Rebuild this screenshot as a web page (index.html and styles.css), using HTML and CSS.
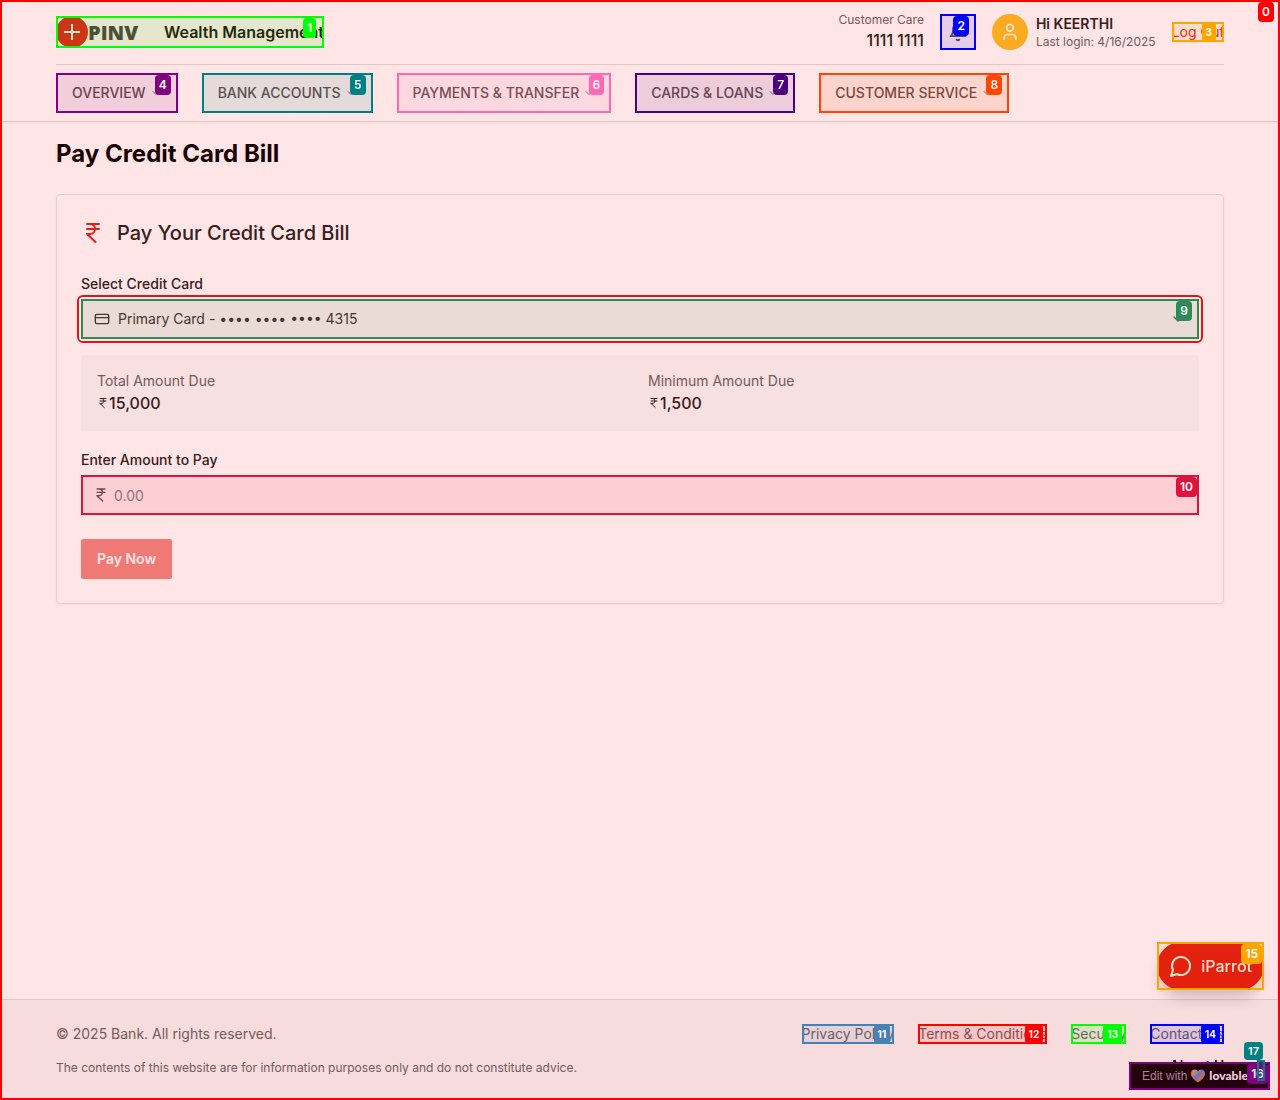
FILE: index.html
```html
<!DOCTYPE html>
<html lang="en">
<head>
<meta charset="utf-8">
<meta name="viewport" content="width=device-width, initial-scale=1">
<title>Pay Credit Card Bill</title>
<link rel="stylesheet" href="styles.css">
</head>
<body>
<div class="page">
  <header class="header">
    <div class="topbar">
      <a class="brand mark lime" href="#">
        <svg class="logo" width="90" height="32" viewBox="0 0 90 32" role="img" aria-label="PINV">
          <circle cx="16" cy="16" r="16" fill="#e2231a"/>
          <path d="M16 8v16M8 16h16" stroke="#fff" stroke-width="2"/>
          <text class="logo-text" x="32" y="24">PINV</text>
        </svg>
        <span class="brand-name">Wealth Management</span>
        <span class="tag tag-inner">1</span>
      </a>
      <div class="tools">
        <div class="care"><span class="small">Customer Care</span><span class="phone">1111 1111</span></div>
        <button class="bell mark blue" type="button" aria-label="Notifications">
          <svg class="icon" width="20" height="20" viewBox="0 0 24 24"><path d="M6 8a6 6 0 0 1 12 0c0 7 3 9 3 9H3s3-2 3-9M10.300 21a1.940 1.940 0 0 0 3.400 0"/></svg>
          <span class="tag">2</span>
        </button>
        <div class="user">
          <span class="avatar"><svg class="icon" width="20" height="20" viewBox="0 0 24 24"><path d="M19 21v-2a4 4 0 0 0-4-4H9a4 4 0 0 0-4 4v2"/><circle cx="12" cy="7" r="4"/></svg></span>
          <div class="who"><span class="hi">Hi KEERTHI</span><span class="small">Last login: 4/16/2025</span></div>
        </div>
        <button class="logout mark orange" type="button">Log Out<span class="tag tag-small tag-inner">3</span></button>
      </div>
    </div>
    <nav class="nav">
      <button class="nav-item mark purple" type="button">OVERVIEW<svg class="icon chevron" width="12" height="12" viewBox="0 0 24 24"><path d="m6 9 6 6 6-6"/></svg><span class="tag">4</span></button>
      <button class="nav-item mark teal" type="button">BANK ACCOUNTS<svg class="icon chevron" width="12" height="12" viewBox="0 0 24 24"><path d="m6 9 6 6 6-6"/></svg><span class="tag">5</span></button>
      <button class="nav-item mark pink" type="button">PAYMENTS &amp; TRANSFER<svg class="icon chevron" width="12" height="12" viewBox="0 0 24 24"><path d="m6 9 6 6 6-6"/></svg><span class="tag">6</span></button>
      <button class="nav-item mark indigo" type="button">CARDS &amp; LOANS<svg class="icon chevron" width="12" height="12" viewBox="0 0 24 24"><path d="m6 9 6 6 6-6"/></svg><span class="tag">7</span></button>
      <button class="nav-item mark orangered" type="button">CUSTOMER SERVICE<svg class="icon chevron" width="12" height="12" viewBox="0 0 24 24"><path d="m6 9 6 6 6-6"/></svg><span class="tag">8</span></button>
    </nav>
  </header>

  <main class="main">
    <h1>Pay Credit Card Bill</h1>
    <section class="card">
      <h2><svg class="icon title-icon" width="24" height="24" viewBox="0 0 24 24"><path d="M6 3h12M6 8h12M6 13l8.500 8M6 13h3M9 13c6.667 0 6.667-10 0-10"/></svg>Pay Your Credit Card Bill</h2>
      <form class="form">
        <label class="label" for="card">Select Credit Card</label>
        <div class="field select-field mark seagreen">
          <svg class="icon" width="16" height="16" viewBox="0 0 24 24"><rect x="2" y="5" width="20" height="14" rx="2"/><path d="M2 10h20"/></svg>
          <select id="card"><option>Primary Card - •••• •••• •••• 4315</option></select>
          <svg class="icon chevron" width="16" height="16" viewBox="0 0 24 24"><path d="m6 9 6 6 6-6"/></svg>
          <span class="tag">9</span>
        </div>
        <dl class="dues">
          <div><dt>Total Amount Due</dt><dd><svg class="icon" width="12" height="12" viewBox="0 0 24 24"><path d="M6 3h12M6 8h12M6 13l8.500 8M6 13h3M9 13c6.667 0 6.667-10 0-10"/></svg>15,000</dd></div>
          <div><dt>Minimum Amount Due</dt><dd><svg class="icon" width="12" height="12" viewBox="0 0 24 24"><path d="M6 3h12M6 8h12M6 13l8.500 8M6 13h3M9 13c6.667 0 6.667-10 0-10"/></svg>1,500</dd></div>
        </dl>
        <label class="label" for="amount">Enter Amount to Pay</label>
        <div class="field amount-field mark crimson">
          <svg class="icon" width="16" height="16" viewBox="0 0 24 24"><path d="M6 3h12M6 8h12M6 13l8.500 8M6 13h3M9 13c6.667 0 6.667-10 0-10"/></svg>
          <input id="amount" type="text" placeholder="0.00">
          <span class="tag tag-edge">10</span>
        </div>
        <button class="pay" type="button" disabled>Pay Now</button>
      </form>
    </section>
  </main>

  <footer class="footer">
    <div class="footer-row">
      <p>© 2025 Bank. All rights reserved.</p>
      <div class="links">
        <a class="mark steel" href="#">Privacy Policy<span class="tag tag-small">11</span></a>
        <a class="mark red" href="#">Terms &amp; Conditions<span class="tag tag-small">12</span></a>
        <a class="mark lime" href="#">Security<span class="tag tag-small">13</span></a>
        <a class="mark blue" href="#">Contact Us<span class="tag tag-small">14</span></a>
      </div>
    </div>
    <p class="note">The contents of this website are for information purposes only and do not constitute advice.</p>
  </footer>
</div>

<span class="about">About Us</span>
<button class="chat mark orange" type="button">
  <span class="chat-pill"><svg class="icon" width="24" height="24" viewBox="0 0 24 24"><path d="M7.900 20A9 9 0 1 0 4 16.100L2 22Z"/></svg>iParrot</span>
  <span class="tag tag-edge">15</span>
</button>
<div class="edit mark purple">
  <a href="#">Edit with
    <svg width="14" height="14" viewBox="0 0 14 14"><defs><linearGradient id="heart" x1="0" y1="0" x2="1" y2="1"><stop offset="0" stop-color="#ff8e3c"/><stop offset=".25" stop-color="#d89060"/><stop offset=".45" stop-color="#4c8dd6"/><stop offset=".6" stop-color="#c07868"/><stop offset="1" stop-color="#ff7a30"/></linearGradient></defs><path d="M7 13.500C2 10 0 7.500 0 4.500 0 2 1.800.5 3.800.5 5.200.5 6.400 1.300 7 2.500 7.600 1.300 8.800.5 10.200.5 12.200.5 14 2 14 4.500c0 3-2 5.500-7 9Z" fill="url(#heart)"/></svg>
    <b>lovable</b></a>
  <span class="tag tag-edge">16</span>
  <button class="close mark teal" type="button" aria-label="Close"><span class="tag tag-above">17</span></button>
</div>
<div class="page-mark red"><span class="tag">0</span></div>
</body>
</html>
```
FILE: styles.css
```css
* { box-sizing: border-box; }
body {
  margin: 0;
  background: #fff;
  color: #222;
  font: 14px/20px Inter, "Liberation Sans", sans-serif;
}
h1, h2, p, dl, dd { margin: 0; }
button, input, select {
  font: inherit;
  color: inherit;
  background: none;
  border: 0;
  padding: 0;
}
a { color: inherit; text-decoration: none; }
.icon {
  fill: none;
  stroke: currentColor;
  stroke-width: 2;
  stroke-linecap: round;
  stroke-linejoin: round;
  flex: none;
}
.page { min-height: 100vh; display: flex; flex-direction: column; }

/* numbered outlines */
.mark { position: relative; }
.mark::after, .page-mark {
  content: "";
  position: absolute;
  inset: 0;
  z-index: 20;
  border: 2px solid var(--mark);
  background: color-mix(in srgb, var(--mark) 10%, transparent);
  pointer-events: none;
}
.page-mark { position: fixed; z-index: 10; }
.tag {
  position: absolute;
  top: 2px;
  right: 7px;
  z-index: 21;
  padding: 0 4px;
  height: 20px;
  border-radius: 4px;
  background: var(--mark);
  color: #fff;
  font-size: 12px;
  line-height: 20px;
  font-weight: 600;
}
.page-mark .tag { top: 0; right: 4px; }
.tag-small { font-size: 10px; top: 0; right: 4px; font-weight: 700; }
.tag-inner { right: 8px; }
.tag-edge { right: 2px; }
.lime { --mark: #0f0; }
.blue { --mark: #00f; }
.orange { --mark: #ffa500; }
.purple { --mark: #800080; }
.teal { --mark: #008080; }
.pink { --mark: #ff69b4; }
.indigo { --mark: #4b0082; }
.orangered { --mark: #ff4500; }
.seagreen { --mark: #2e8b57; }
.crimson { --mark: #dc143c; }
.steel { --mark: #4682b4; }
.red { --mark: #f00; }

/* header */
.header {
  padding: 0 56px;
  border-bottom: 1px solid #ddd;
  box-shadow: 0 1px 2px rgba(0, 0, 0, .05);
}
.topbar {
  display: flex;
  justify-content: space-between;
  align-items: center;
  height: 65px;
  border-bottom: 1px solid #ddd;
}
.brand { display: flex; align-items: center; gap: 18px; height: 32px; color: #111; }
.logo-text { font: 800 20px "Open Sans", sans-serif; fill: #444; }
.brand-name { font-size: 16px; line-height: 24px; font-weight: 600; }
.tools { display: flex; align-items: center; gap: 16px; }
.care, .who { display: flex; flex-direction: column; }
.care { text-align: right; }
.small { font-size: 12px; line-height: 16px; color: #666; }
.phone { font-size: 16px; line-height: 24px; font-weight: 500; }
.bell {
  width: 36px;
  height: 36px;
  display: grid;
  place-items: center;
  color: #555;
}
.user { display: flex; align-items: center; gap: 8px; }
.avatar {
  width: 36px;
  height: 36px;
  border-radius: 50%;
  display: grid;
  place-items: center;
  background: #fbbf24;
  color: #fff;
}
.hi { font-weight: 600; }
.logout { color: #e2231a; height: 20px; }
.nav { display: flex; gap: 24px; padding: 8px 0; }
.nav-item {
  display: flex;
  align-items: center;
  gap: 4px;
  height: 40px;
  padding: 0 16px;
  font-weight: 500;
  color: #555;
}
.chevron { opacity: .8; }

/* payment form */
.main { flex: 1; padding: 16px 56px 48px; }
h1 { font-size: 24px; line-height: 32px; font-weight: 700; margin-bottom: 24px; color: #000; }
.card {
  border: 1px solid #e5e5e5;
  border-radius: 4px;
  padding: 24px;
  box-shadow: 0 1px 2px rgba(0, 0, 0, .05);
}
h2 {
  display: flex;
  align-items: center;
  gap: 12px;
  font-size: 20px;
  line-height: 28px;
  font-weight: 500;
  margin-bottom: 30px;
}
.title-icon { color: #e2231a; }
.form { display: flex; flex-direction: column; }
.label { font-weight: 500; line-height: 14px; margin-bottom: 8px; }
.field {
  display: flex;
  align-items: center;
  gap: 8px;
  height: 40px;
  padding: 0 13px;
}
.select-field {
  outline: 2px solid #d71920;
  outline-offset: 2px;
  border-radius: 2px;
  margin-bottom: 16px;
  color: #333;
}
.field select, .field input { flex: 1; min-width: 0; height: 36px; outline: none; }
.field select { appearance: none; }
.dues {
  display: grid;
  grid-template-columns: 1fr 1fr;
  gap: 16px;
  padding: 16px;
  margin-bottom: 22px;
  background: #f8f9fa;
  border-radius: 2px;
}
.dues dt { color: #666; }
.dues dd {
  display: flex;
  align-items: center;
  font-size: 16px;
  line-height: 24px;
  font-weight: 500;
}
.amount-field { margin-bottom: 24px; padding: 0 12px; gap: 5px; color: #555; }
.amount-field input::placeholder { color: #888; opacity: 1; }
.pay {
  align-self: flex-start;
  height: 40px;
  padding: 0 16px;
  border-radius: 2px;
  background: #ee8783;
  color: #fff;
  font-weight: 600;
}

/* footer */
.footer {
  border-top: 1px solid #ddd;
  background: #f7f5f6;
  padding: 24px 56px;
  color: #666;
}
.footer-row { display: flex; justify-content: space-between; margin-bottom: 16px; }
.links { display: flex; gap: 24px; }
.note { font-size: 12px; line-height: 16px; }

/* floating controls */
.about { position: fixed; right: 48px; bottom: 24px; font-weight: 600; color: #000; }
.chat {
  position: fixed;
  z-index: 15;
  right: 16px;
  bottom: 110px;
  height: 48px;
}
.chat-pill {
  display: flex;
  align-items: center;
  gap: 8px;
  height: 48px;
  padding: 0 12px;
  border-radius: 24px;
  background: #df1410;
  color: #ffe5e5;
  font-size: 16px;
  font-weight: 500;
  box-shadow: 0 10px 15px -3px rgba(0, 0, 0, .2);
}
.edit {
  position: fixed;
  z-index: 15;
  right: 10px;
  bottom: 10px;
  width: 141px;
  height: 28px;
  padding: 0 13px;
  background: #1a0000;
  color: #b09098;
  font: 12px/20px "Liberation Sans", sans-serif;
}
.edit a { display: flex; align-items: center; gap: 4px; height: 28px; white-space: nowrap; }
.edit b { color: #ffe5e5; font: 900 12px/20px Lato, sans-serif; }
.edit .tag { font-family: Inter, sans-serif; }
.close { position: absolute; z-index: 22; right: 5px; top: -2px; width: 8px; height: 21px; }
.edit .tag-above { top: -18px; right: 2px; height: 18px; line-height: 18px; font-size: 11px; }
```
